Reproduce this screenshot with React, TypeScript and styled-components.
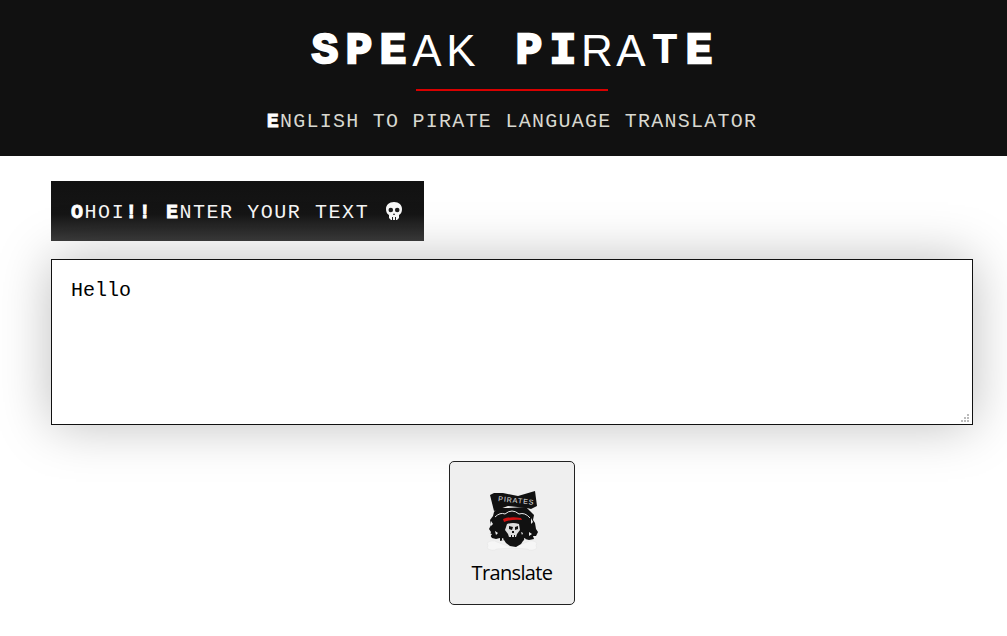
import React from 'react';
import styled, { createGlobalStyle } from 'styled-components';

const GlobalStyle = createGlobalStyle`
  html, body {
    margin: 0;
    padding: 0;
    background: #fff;
  }
  body {
    font-family: "Liberation Mono", monospace;
  }
`;

const Page = styled.div`
  width: 1007px;
  height: 636px;
  overflow: hidden;
`;

const Header = styled.header`
  height: 156px;
  box-sizing: border-box;
  padding: 26px 0 0 17px;
  background: #111;
  display: flex;
  flex-direction: column;
  align-items: center;
`;

const Title = styled.h1`
  margin: 0;
  height: 50px;
  display: flex;
  line-height: 50px;
  font-family: "Liberation Mono", monospace;
  font-size: 44px;
  font-weight: 700;
  color: #fff;
  white-space: pre;
`;

const Letter = styled.span<{ $look: 'heavy' | 'thin' | 'plain' }>`
  width: 34px;
  text-align: center;
  ${props => props.$look === 'heavy' && '-webkit-text-stroke: 2.5px #fff;'}
  ${props => props.$look === 'thin' && 'font-family: "Liberation Sans", sans-serif; font-weight: 400;'}
`;

const Rule = styled.div`
  width: 192px;
  height: 2px;
  margin-top: 13px;
  background: #d90000;
`;

const Subtitle = styled.p`
  margin: 19px 0 0;
  font-size: 20px;
  line-height: 24px;
  letter-spacing: 1.25px;
  color: #d8d8d0;
  white-space: pre;
`;

const Initial = styled.span`
  color: #fff;
  font-weight: 700;
  -webkit-text-stroke: 0.8px #fff;
`;

const Main = styled.main`
  padding: 25px 34px 0 51px;
`;

const Label = styled.div`
  width: 373px;
  height: 60px;
  box-sizing: border-box;
  padding: 2px 0 0 20px;
  display: flex;
  align-items: center;
  background: linear-gradient(#111 0%, #151515 55%, #3c3c3c 100%);
  color: #f4f4f4;
`;

const LabelText = styled.span`
  font-size: 20px;
  letter-spacing: 1.55px;
  white-space: pre;
`;

const Skull = styled.svg`
  width: 16px;
  height: 18px;
  margin: -2px 0 0 17px;
`;

const TextBox = styled.textarea`
  display: block;
  width: 922px;
  height: 166px;
  box-sizing: border-box;
  margin-top: 18px;
  padding: 19px 19px;
  border: 1px solid #111;
  outline: none;
  background: #fff;
  color: #000;
  font-family: "Liberation Mono", monospace;
  font-size: 20px;
  line-height: 23px;
  box-shadow: 0 0 50px rgba(0, 0, 0, 0.26);

  &::-webkit-resizer {
    background-color: #fff;
    background-image:
      linear-gradient(#bbb, #bbb), linear-gradient(#bbb, #bbb), linear-gradient(#bbb, #bbb),
      linear-gradient(#bbb, #bbb), linear-gradient(#bbb, #bbb), linear-gradient(#bbb, #bbb);
    background-size: 2px 2px;
    background-repeat: no-repeat;
    background-position: 10px 5px, 7px 8px, 10px 8px, 4px 11px, 7px 11px, 10px 11px;
  }
`;

const Actions = styled.div`
  width: 922px;
  margin-top: 36px;
  display: flex;
  justify-content: center;
`;

const TranslateButton = styled.button`
  width: 126px;
  height: 144px;
  box-sizing: border-box;
  padding: 24px 0 0;
  display: flex;
  flex-direction: column;
  align-items: center;
  background: #efefef;
  border: 1px solid #222;
  border-radius: 5px;
  color: #000;
  font-family: "Open Sans", sans-serif;
  font-size: 20px;
  line-height: 24px;
  letter-spacing: -0.65px;
`;

const Logo = styled.svg`
  width: 68px;
  height: 68px;
  margin-bottom: 7px;
`;

const titleLetters: { ch: string; look: 'heavy' | 'thin' | 'plain' }[] = [
  { ch: 'S', look: 'heavy' },
  { ch: 'P', look: 'heavy' },
  { ch: 'E', look: 'heavy' },
  { ch: 'A', look: 'thin' },
  { ch: 'K', look: 'thin' },
  { ch: ' ', look: 'plain' },
  { ch: 'P', look: 'heavy' },
  { ch: 'I', look: 'heavy' },
  { ch: 'R', look: 'thin' },
  { ch: 'A', look: 'thin' },
  { ch: 'T', look: 'plain' },
  { ch: 'E', look: 'heavy' },
];

const PirateLogo = () => (
  <Logo viewBox="0 0 68 68">
    {/* faint crossbones under the figure */}
    <path fill="#f6f6f6" stroke="#e6e6e6" strokeWidth="0.6" d="M9 57q5-4 10-1 7 3 15 5 8-2 15-5 5-3 10 1-2 3 0 5-5 4-10 1l-15-1-15 1q-5 3-10-1 2-2 0-5z" />
    {/* flag */}
    <path fill="#111" d="M12 9l4-2 9 0 15 3 17-5 2 15-6 3-4-1-19-2-14 5z" />
    <text x="20" y="15" fill="#e8e8e8" fontFamily="Liberation Sans, sans-serif" fontSize="7" letterSpacing="1" transform="rotate(6 20 15)">PIRATES</text>
    {/* body and hair */}
    <path fill="#111" d="M19 22l11 0 18-1 4 4 4 4-1 5 2 3 1 6 2 3-2 4-3 0 1 3-5 1-4-1-2 2-2 3-5 3-6-1-4-3-2-3-4 1 0-3-4 1-4-1-2-3 1-3-2-3 2-4-1-5 3-4 1-4z" />
    <path fill="none" stroke="#e8e8e8" strokeWidth="1" d="M17 31q5-5 10-3 7-6 14 0 6-2 11 4" />
    <path fill="#d01010" d="M25 33q8-3 18-1l1 2q-10-1-18 2z" />
    {/* skull */}
    <path fill="#dedede" d="M29 38q6-2 12 0l1 6-3 4-1 3h-7l-1-3-3-4z" />
    <path fill="#111" d="M31 40l4 1-1 3-3-1zM37 41l3-1 0 3-3 1zM34 45h2v2h-2zM33 49h1v2h-1zM36 49h1v2h-1z" />
    <path fill="#eee" d="M13 35l2 3-2 2zM53 32l2 4-2 2zM10 47l4 1-2 3zM17 45l3 2-2 2zM51 46l3 2-3 2zM46 52l2 1-2 1zM24 52l2 1-2 2zM43 46l2 1-1 2z" />
  </Logo>
);

const App = () => (
  <Page>
    <GlobalStyle />
    <Header>
      <Title>
        {titleLetters.map((l, i) => (
          <Letter key={i} $look={l.look}>{l.ch}</Letter>
        ))}
      </Title>
      <Rule />
      <Subtitle><Initial>E</Initial>NGLISH TO PIRATE LANGUAGE TRANSLATOR</Subtitle>
    </Header>
    <Main>
      <Label>
        <LabelText>
          <Initial>O</Initial>HOI<Initial>!!</Initial> <Initial>E</Initial>NTER YOUR TEXT
        </LabelText>
        <Skull viewBox="0 0 16 18">
          <path fill="#f6f6f6" d="M8 0c5 0 8 3 8 7 0 3-1 5-3 6v3l-2 2H5l-2-2v-3C1 12 0 10 0 7c0-4 3-7 8-7z" />
          <circle cx="4.8" cy="8" r="2.3" fill="#1c1c1c" />
          <circle cx="11.2" cy="8" r="2.3" fill="#1c1c1c" />
          <path fill="#1c1c1c" d="M8 11l1 2H7zM6 15h1v3H6zM9 15h1v3H9z" />
        </Skull>
      </Label>
      <TextBox defaultValue="Hello" spellCheck={false} />
      <Actions>
        <TranslateButton type="button">
          <PirateLogo />
          Translate
        </TranslateButton>
      </Actions>
    </Main>
  </Page>
);

export default App;
